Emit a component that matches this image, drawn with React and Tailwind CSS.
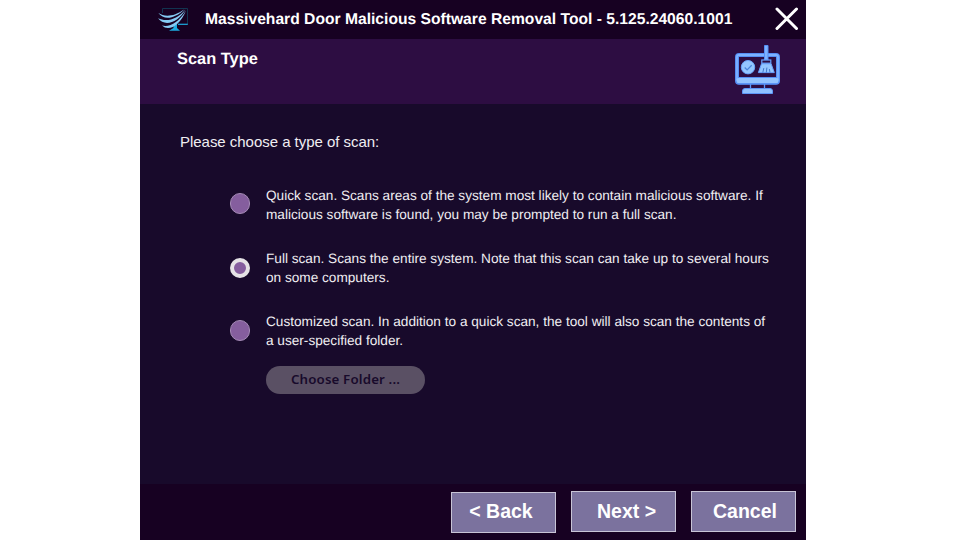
const OPTIONS = [
  {
    id: 'quick',
    radioOffset: 'mb-[3px]',
    lines: [
      'Quick scan. Scans areas of the system most likely to contain malicious software. If',
      'malicious software is found, you may be prompted to run a full scan.',
    ],
  },
  {
    id: 'full',
    selected: true,
    radioOffset: '',
    lines: [
      'Full scan. Scans the entire system. Note that this scan can take up to several hours',
      'on some computers.',
    ],
  },
  {
    id: 'custom',
    radioOffset: 'mb-px',
    lines: [
      'Customized scan. In addition to a quick scan, the tool will also scan the contents of',
      'a user-specified folder.',
    ],
  },
];

function Logo() {
  return (
    <svg width="30" height="24" viewBox="0 0 30 24" fill="none" className="mt-[3px] shrink-0">
      <path d="M4.500 5V.500h25v15.500" stroke="#123450" strokeWidth="1" />
      <path d="M20 16.300h9.800" stroke="#1cabe0" strokeWidth="1.200" />
      <path d="M15.500 17.500l3.500-2v4.500l3 2.700H11l4.500-2.700z" fill="#1cabe0" />
      <path d="M.3 5C6.500 8.800 15 9.300 26.500 1.200 17 10.800 6 12.700.3 5z" fill="#86cbf4" />
      <path d="M0 10.300C9 14.300 19 11.500 27.500 1.500 20 15 6.500 19 0 10.300z" fill="#86cbf4" />
      <path d="M4 17.600C12 19.500 20.500 14.500 28 2.500 22 17.800 10.500 24 4 17.600z" fill="#86cbf4" />
    </svg>
  );
}

function CleanMonitor() {
  return (
    <svg width="45" height="50" viewBox="0 0 45 50" fill="none" className="shrink-0">
      <rect x="2" y="10" width="41" height="27.700" rx="2" stroke="#568ff5" strokeWidth="4" />
      <rect x="2" y="10" width="41" height="27.700" rx="2" stroke="#7db2ff" strokeWidth="1.800" />
      <rect x="1.500" y="33" width="42" height="5" rx="2" fill="#93c4ff" />
      <path d="M3 32.500h39" stroke="#568ff5" />
      <path d="M1 35.500c0 2 1 3.300 3 3.300h37c2 0 3-1.300 3-3.300" stroke="#568ff5" />
      <path d="M15.500 39v4.500M29.500 39v4.500" stroke="#5d97f8" strokeWidth="1.300" />
      <path d="M7.500 48.500v-2.500a2.500 2.500 0 0 1 2.500-2.500h25a2.500 2.500 0 0 1 2.500 2.500v2.500z" fill="#8fc1ff" stroke="#5d97f8" />
      <circle cx="13" cy="22.200" r="6.700" fill="#94c6ff" stroke="#6aa5fb" />
      <path d="M9.700 22.500l2.400 2.400 4.600-4.600" stroke="#4b86dc" strokeWidth="1.300" />
      <path d="M29.500.500h3.500v14.500h-3.500z" fill="#7db3ff" stroke="#568ff5" />
      <rect x="26.800" y="15" width="9" height="3.200" fill="#2d0d42" stroke="#69a3ff" strokeWidth="1.200" />
      <path d="M26.500 18.800h9.600l3.200 8.800H23.400z" fill="#94c6ff" stroke="#69a3ff" />
      <path d="M27.800 27.600l1-4.500M31.300 27.600l.6-5M35 27.600l-.6-3.500" stroke="#4478cc" strokeWidth="1" />
    </svg>
  );
}

function Radio({ selected, className }) {
  const look = selected ? 'border-4 border-[#e5e3e6]' : 'border border-[#a58bb6]';
  return <span className={`size-[20.5px] shrink-0 rounded-full bg-[#855e9e] ${look} ${className}`} />;
}

function FooterButton({ children, className }) {
  return (
    <button
      className={
        'flex h-[41px] w-[105px] items-center justify-center border border-[#c8c4d6] bg-[#7b729e] text-[19.5px] leading-none font-bold whitespace-pre text-white ' +
        className
      }
    >
      {children}
    </button>
  );
}

export default function App() {
  return (
    <div className="h-[540px] w-[960px] overflow-hidden bg-white pl-[140px] font-['Liberation_Sans',Arial,sans-serif] text-white">
      <main className="flex h-full w-[666px] flex-col bg-[#180a2b]">
        <header className="flex h-[39px] shrink-0 items-center bg-[#170122] pr-[7px] pb-[2px] pl-[18px]">
          <Logo />
          <h1 className="mt-[2px] ml-[17px] grow text-[15.65px] leading-[16px] font-bold whitespace-nowrap [text-rendering:geometricPrecision]">
            Massivehard Door Malicious Software Removal Tool - 5.125.24060.1001
          </h1>
          <button aria-label="Close">
            <svg width="24" height="24" viewBox="0 0 24 24" fill="none">
              <path d="M2 2l19.500 19.500M21.500 2l-19.500 19.500" stroke="#fff" strokeWidth="3" strokeLinecap="round" />
            </svg>
          </button>
        </header>
        <section className="flex h-[65px] shrink-0 justify-between bg-[#2d0d42] pt-[6px] pr-[26px] pl-[37px]">
          <h2 className="mt-[6px] text-[16.4px] leading-[17px] font-bold [text-rendering:geometricPrecision]">Scan Type</h2>
          <CleanMonitor />
        </section>
        <section className="grow pt-[29px] pl-10">
          <p className="text-[15px] leading-[18px] tracking-[-0.03px] text-[#f0eef2]">Please choose a type of scan:</p>
          <div className="mt-[35px] ml-[49.5px] flex flex-col gap-[25px]">
            {OPTIONS.map((o) => (
              <label key={o.id} className="flex h-[38px] items-center gap-4">
                <Radio selected={o.selected} className={o.radioOffset} />
                <span className="text-[13.63px] leading-[19px] whitespace-nowrap text-[#f0eef2] [text-rendering:geometricPrecision]">
                  {o.lines[0]}
                  <br />
                  {o.lines[1]}
                </span>
              </label>
            ))}
          </div>
          <button className="mt-4 ml-[86px] flex h-[27.5px] w-[159px] items-center justify-center rounded-full bg-[#5a5064] pt-px font-['Noto_Sans',sans-serif] text-[13.3px] font-semibold tracking-[0.15px] text-[#180a2b]">
            Choose Folder ...
          </button>
        </section>
        <footer className="flex h-[56px] shrink-0 justify-end gap-[15px] bg-[#170122] pt-[7px] pr-[10px]">
          <FooterButton className="mt-px pr-[5px] pb-[2px]">{'< Back'}</FooterButton>
          <FooterButton className="pl-[6px]">{'Next >'}</FooterButton>
          <FooterButton className="pl-[3px]">Cancel</FooterButton>
        </footer>
      </main>
    </div>
  );
}
